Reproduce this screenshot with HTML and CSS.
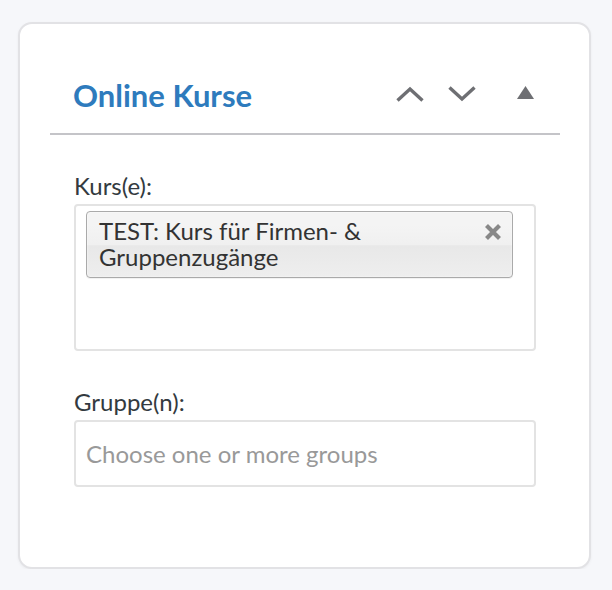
FILE: index.html
```html
<!DOCTYPE html>
<html>

<head>
    <title>Online Kurse</title>
    <meta name="viewport" content="width=device-width, initial-scale=1" charset="UTF-8">
    <link rel="stylesheet" href="styles.css">
</head>

<body>
    <div class="card">
        <!-- Kopfzeile mit Titel und Steuerung -->
        <div class="card-head">
            <h2 class="title">Online Kurse</h2>
            <div class="tools">
                <svg class="tool" width="28" height="16" viewBox="0 0 28 16">
                    <polyline points="1.5,14.5 14,3 26.5,14.5" fill="none" stroke="#6e6f73" stroke-width="3.4" />
                </svg>
                <svg class="tool" width="28" height="16" viewBox="0 0 28 16">
                    <polyline points="1.5,1.5 14,13 26.5,1.5" fill="none" stroke="#6e6f73" stroke-width="3.4" />
                </svg>
                <svg class="tool tool-tri" width="17" height="13" viewBox="0 0 17 13">
                    <polygon points="8.5,0 17,13 0,13" fill="#6e6f73" />
                </svg>
            </div>
        </div>

        <div class="card-body">
            <div class="field">
                <label class="field-label">Kurs(e):</label>
                <div class="multi">
                    <div class="chip">
                        <span class="chip-text">TEST: Kurs für Firmen- &amp; Gruppenzugänge</span>
                        <svg class="chip-close" width="18" height="18" viewBox="0 0 18 18">
                            <path d="M2.5 2.5 L15.5 15.5 M15.5 2.5 L2.5 15.5" stroke="#888888" stroke-width="4.2" />
                        </svg>
                    </div>
                </div>
            </div>

            <div class="field">
                <label class="field-label">Gruppe(n):</label>
                <div class="single">Choose one or more groups</div>
            </div>
        </div>
    </div>
</body>

</html>
```

FILE: styles.css
```css
body {
    margin: 0;
    background-color: #f6f7fa;
    font-family: "Lato", "Noto Sans", sans-serif;
    color: #333a40;
}

.card {
    box-sizing: border-box;
    width: 573px;
    margin: 22px 0 0 18px;
    padding: 0 29px 80px 30px;
    background-color: #ffffff;
    border: 2px solid #e2e2e5;
    border-radius: 14px;
    box-shadow: 0 1px 3px rgba(0, 0, 0, 0.05);
}

.card-head {
    display: flex;
    align-items: center;
    justify-content: space-between;
    padding: 53px 26px 20px 23px;
    border-bottom: 2px solid #c4c4c8;
}

.title {
    margin: 0;
    font-size: 31px;
    line-height: 36px;
    font-weight: 700;
    color: #2e7bbd;
}

.tools {
    display: flex;
    align-items: center;
    margin-top: -2px;
}

.tool {
    display: block;
    margin-left: 24px;
}

.tool-tri {
    margin-left: 41px;
    margin-top: -3px;
}

.card-body {
    padding: 0 24px;
}

.field {
    margin-top: 38px;
}

.field + .field {
    margin-top: 38px;
}

.field-label {
    display: block;
    font-size: 24px;
    line-height: 26px;
    margin-bottom: 5px;
}

.multi {
    height: 138px;
    border: 2px solid #e3e3e3;
    border-radius: 4px;
    padding: 5px 21px 0 10px;
}

.chip {
    display: flex;
    align-items: flex-start;
    box-sizing: border-box;
    height: 67px;
    padding: 6px 10px 0 12px;
    border: 1px solid #aaaaaa;
    border-radius: 4px;
    background: linear-gradient(#f4f4f4 20%, #f0f0f0 50%, #e8e8e8 52%, #eeeeee);
    box-shadow: 0 0 2px #ffffff inset, 0 1px 0 rgba(0, 0, 0, 0.05);
}

.chip-text {
    flex: 1;
    font-size: 24px;
    line-height: 26px;
    color: #333333;
}

.chip-close {
    display: block;
    margin-top: 5px;
    margin-left: 8px;
}

.single {
    height: 63px;
    border: 2px solid #e3e3e3;
    border-radius: 4px;
    padding: 0 10px;
    font-size: 24px;
    line-height: 63px;
    color: #999999;
}
```
